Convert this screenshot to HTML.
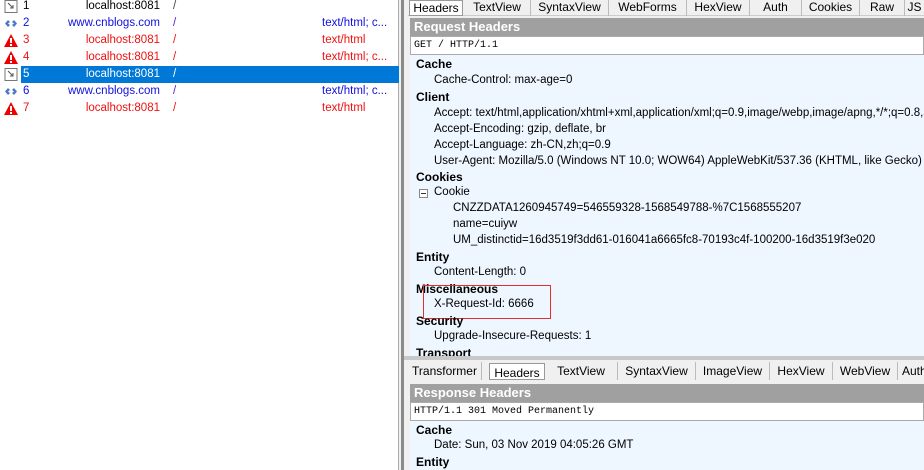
<!DOCTYPE html>
<html><head><meta charset="utf-8"><style>
*{margin:0;padding:0;box-sizing:border-box}
html,body{overflow:hidden}
body{width:924px;height:470px;background:#f0f0f0;font-family:"Liberation Sans",sans-serif;font-size:11.5px;position:relative}
#root{position:absolute;left:0;top:0;width:924px;height:470px;overflow:hidden}
.a,.g,.i,.k{position:absolute;white-space:nowrap}
#left{position:absolute;left:0;top:0;width:399px;height:470px;background:#fff;border-right:1px solid #aaa}
.row{position:absolute;left:0;width:399px;height:17px;line-height:17px}
.row .n{position:absolute;left:23px}
.row .h{position:absolute;right:239px}
.row .s{position:absolute;left:173px}
.row .t{position:absolute;left:322px}
.blue{color:#1010e0}.red{color:#f01010}
.sel{background:#0078d7;color:#fff}
.ic{position:absolute;left:4px;top:2px;width:14px;height:13px}
.tabs{position:absolute;left:408px;right:0;height:16px;background:#f0f0f0;border-bottom:1px solid #ccc}
.tab{position:absolute;top:0;height:16px;line-height:14px;border-right:1px solid #bbb;text-align:center;font-size:12px;white-space:nowrap}
.bar{position:absolute;left:410px;right:0;background:#a0a0a0;color:#fff;font-weight:bold;font-size:13px;padding-left:4px}
.mono{position:absolute;left:410px;right:0;background:#fff;border:1px solid #aaa;font-family:"Liberation Mono",monospace;font-size:10px;padding-left:3px}
.pane{position:absolute;left:410px;right:0;background:#eef6ff}
.g{left:416px;font-weight:bold;font-size:12px}
.i{left:434px}
.k{left:453px}
</style></head><body><div id="root">
<div id="left">
<div class="row" style="top:-2px"><svg class="ic" viewBox="0 0 14 13"><rect x="1" y="0.5" width="12" height="12" fill="#fff" stroke="#777"/><path d="M4 3 L9 8 M9 5 V8 H6" stroke="#555" fill="none"/></svg><span class="n">1</span><span class="h">localhost:8081</span><span class="s" style="color:#444">/</span></div>
<div class="row blue" style="top:15px"><svg class="ic" viewBox="0 0 14 13"><path d="M1 6.5 L4 3 L6 5 L4 6.5 L6 8 L4 10Z M13 6.5 L10 3 L8 5 L10 6.5 L8 8 L10 10Z" fill="#4a7ac0"/></svg><span class="n">2</span><span class="h">www.cnblogs.com</span><span class="s" style="color:#6020d0">/</span><span class="t">text/html; c...</span></div>
<div class="row red" style="top:32px"><svg class="ic" viewBox="0 0 14 13"><path d="M7 0 L14 13 H0Z" fill="#e00"/><rect x="6" y="4" width="2" height="5" fill="#fff"/><rect x="6" y="10" width="2" height="2" fill="#fff"/></svg><span class="n">3</span><span class="h">localhost:8081</span><span class="s">/</span><span class="t">text/html</span></div>
<div class="row red" style="top:49px"><svg class="ic" viewBox="0 0 14 13"><path d="M7 0 L14 13 H0Z" fill="#e00"/><rect x="6" y="4" width="2" height="5" fill="#fff"/><rect x="6" y="10" width="2" height="2" fill="#fff"/></svg><span class="n">4</span><span class="h">localhost:8081</span><span class="s">/</span><span class="t">text/html; c...</span></div>
<div class="row" style="top:66px"><div class="sel" style="position:absolute;left:21px;right:0;top:0;height:17px"></div><svg class="ic" viewBox="0 0 14 13"><rect x="1" y="0.5" width="12" height="12" fill="#fff" stroke="#777"/><path d="M4 3 L9 8 M9 5 V8 H6" stroke="#555" fill="none"/></svg><span class="n" style="color:#fff">5</span><span class="h" style="color:#fff">localhost:8081</span><span class="s" style="color:#fff">/</span></div>
<div class="row blue" style="top:83px"><svg class="ic" viewBox="0 0 14 13"><path d="M1 6.5 L4 3 L6 5 L4 6.5 L6 8 L4 10Z M13 6.5 L10 3 L8 5 L10 6.5 L8 8 L10 10Z" fill="#4a7ac0"/></svg><span class="n">6</span><span class="h">www.cnblogs.com</span><span class="s" style="color:#6020d0">/</span><span class="t">text/html; c...</span></div>
<div class="row red" style="top:100px"><svg class="ic" viewBox="0 0 14 13"><path d="M7 0 L14 13 H0Z" fill="#e00"/><rect x="6" y="4" width="2" height="5" fill="#fff"/><rect x="6" y="10" width="2" height="2" fill="#fff"/></svg><span class="n">7</span><span class="h">localhost:8081</span><span class="s">/</span><span class="t">text/html</span></div>
</div>
<div class="a" style="left:401px;top:0;width:3px;height:470px;background:#8a8a8a"></div>

<div class="tabs" style="top:0">
<div class="tab" style="left:1px;width:54px;background:#fff;border:1px solid #999;">Headers</div>
<div class="tab" style="left:56px;width:67px">TextView</div>
<div class="tab" style="left:123px;width:78px">SyntaxView</div>
<div class="tab" style="left:201px;width:78px">WebForms</div>
<div class="tab" style="left:279px;width:63px">HexView</div>
<div class="tab" style="left:342px;width:52px">Auth</div>
<div class="tab" style="left:394px;width:58px">Cookies</div>
<div class="tab" style="left:452px;width:45px">Raw</div>
<div class="tab" style="left:497px;width:19px;border:none;overflow:hidden">JS</div>
</div>
<div class="bar" style="top:18px;height:18px;line-height:18px">Request Headers</div>
<div class="mono" style="top:36px;height:19px;line-height:17px">GET / HTTP/1.1</div>
<div class="pane" style="top:55px;height:301px;overflow:hidden"></div>
<div class="g" style="top:57px">Cache</div>
<div class="i" style="top:74px">Cache-Control: max-age=0</div>
<div class="g" style="top:90px">Client</div>
<div class="i" style="top:107px">Accept: text/html,application/xhtml+xml,application/xml;q=0.9,image/webp,image/apng,*/*;q=0.8,ap</div>
<div class="i" style="top:123px">Accept-Encoding: gzip, deflate, br</div>
<div class="i" style="top:139px">Accept-Language: zh-CN,zh;q=0.9</div>
<div class="i" style="top:155px">User-Agent: Mozilla/5.0 (Windows NT 10.0; WOW64) AppleWebKit/537.36 (KHTML, like Gecko) Chrom</div>
<div class="g" style="top:170px">Cookies</div>
<div class="a" style="left:419px;top:189px;width:9px;height:9px;border:1px solid #888;background:#fff"><div style="position:absolute;left:1px;top:3px;width:5px;height:1px;background:#333"></div></div>
<div class="i" style="top:186px">Cookie</div>
<div class="k" style="top:202px">CNZZDATA1260945749=546559328-1568549788-%7C1568555207</div>
<div class="k" style="top:218px">name=cuiyw</div>
<div class="k" style="top:234px">UM_distinctid=16d3519f3dd61-016041a6665fc8-70193c4f-100200-16d3519f3e020</div>
<div class="g" style="top:250px">Entity</div>
<div class="i" style="top:266px">Content-Length: 0</div>
<div class="g" style="top:282px">Miscellaneous</div>
<div class="i" style="top:298px">X-Request-Id: 6666</div>
<div class="a" style="left:423px;top:285px;width:128px;height:34px;border:1px solid #e03030"></div>
<div class="g" style="top:314px">Security</div>
<div class="i" style="top:330px">Upgrade-Insecure-Requests: 1</div>
<div class="g" style="top:346px;height:10px;overflow:hidden">Transport</div>
<div class="a" style="left:404px;top:356px;width:520px;height:4px;background:#c8c8c8"></div>

<div class="tabs" style="top:362px;height:18px;border-bottom:none;overflow:hidden">
<div class="tab" style="left:0;width:74px;height:18px;line-height:18px">Transformer</div>
<div class="tab" style="left:81px;width:56px;height:17px;line-height:18px;background:#fff;border:1px solid #999;margin-top:1px">Headers</div>
<div class="tab" style="left:137px;width:73px;height:18px;line-height:18px">TextView</div>
<div class="tab" style="left:210px;width:78px;height:18px;line-height:18px">SyntaxView</div>
<div class="tab" style="left:288px;width:74px;height:18px;line-height:18px">ImageView</div>
<div class="tab" style="left:362px;width:63px;height:18px;line-height:18px">HexView</div>
<div class="tab" style="left:425px;width:65px;height:18px;line-height:18px">WebView</div>
<div class="tab" style="left:490px;width:26px;height:18px;line-height:18px;border:none;text-align:left;padding-left:4px;overflow:hidden">Auth</div>
</div>
<div class="bar" style="top:384px;height:18px;line-height:18px">Response Headers</div>
<div class="mono" style="top:402px;height:19px;line-height:17px">HTTP/1.1 301 Moved Permanently</div>
<div class="pane" style="top:421px;height:49px"></div>
<div class="g" style="top:423px">Cache</div>
<div class="i" style="top:439px">Date: Sun, 03 Nov 2019 04:05:26 GMT</div>
<div class="g" style="top:455px">Entity</div>
</div></body></html>
